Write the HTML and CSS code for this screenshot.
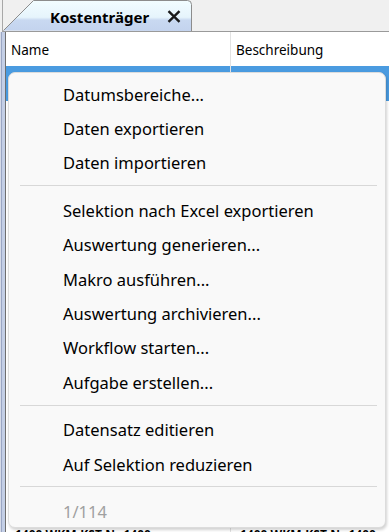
FILE: index.html
```html
<!DOCTYPE html>
<html lang="de">
<head>
<meta charset="utf-8">
<title>Kostenträger</title>
<link rel="stylesheet" href="styles.css">
</head>
<body>
<div class="app">
  <div class="tabstrip">
    <div class="tab">
      <svg class="tab-shape" width="190" height="32" viewBox="0 0 190 32">
        <defs>
          <linearGradient id="tg" x1="0" y1="0" x2="0" y2="1">
            <stop offset="0" stop-color="#f2fdff"/>
            <stop offset="0.55" stop-color="#e6f4fc"/>
            <stop offset="0.64" stop-color="#c9d9f1"/>
            <stop offset="1" stop-color="#c3d3ee"/>
          </linearGradient>
        </defs>
        <path d="M0.5 31.5 L30.5 1.5 L184.5 1.5 Q188.5 1.5 188.5 5.5 L188.5 32" fill="url(#tg)" stroke="#8c8c8c" stroke-width="1"/>
      </svg>
      <span class="tab-title">Kostenträger</span>
      <svg class="tab-close" width="14" height="13" viewBox="0 0 14 13">
        <path d="M1.5 1.2 L12.5 11.8 M12.5 1.2 L1.5 11.8" stroke="#1a1a1a" stroke-width="2.4"/>
      </svg>
    </div>
  </div>
  <div class="content">
    <div class="stripe"></div>
    <div class="grid">
      <div class="header">
        <div class="col col-name">Name</div>
        <div class="col col-desc">Beschreibung</div>
      </div>
      <div class="rows">
        <div class="row selected"><div class="cell c1">0100 WKM-KST-Nr 0100</div><div class="cell c2">0100 WKM-KST-Nr 0100</div></div>
        <div class="row"><div class="cell c1">0200 WKM-KST-Nr 0200</div><div class="cell c2">0200 WKM-KST-Nr 0200</div></div>
        <div class="row"><div class="cell c1">0300 WKM-KST-Nr 0300</div><div class="cell c2">0300 WKM-KST-Nr 0300</div></div>
        <div class="row"><div class="cell c1">0400 WKM-KST-Nr 0400</div><div class="cell c2">0400 WKM-KST-Nr 0400</div></div>
        <div class="row"><div class="cell c1">0500 WKM-KST-Nr 0500</div><div class="cell c2">0500 WKM-KST-Nr 0500</div></div>
        <div class="row"><div class="cell c1">0600 WKM-KST-Nr 0600</div><div class="cell c2">0600 WKM-KST-Nr 0600</div></div>
        <div class="row"><div class="cell c1">0700 WKM-KST-Nr 0700</div><div class="cell c2">0700 WKM-KST-Nr 0700</div></div>
        <div class="row"><div class="cell c1">0800 WKM-KST-Nr 0800</div><div class="cell c2">0800 WKM-KST-Nr 0800</div></div>
        <div class="row"><div class="cell c1">0900 WKM-KST-Nr 0900</div><div class="cell c2">0900 WKM-KST-Nr 0900</div></div>
        <div class="row"><div class="cell c1">1000 WKM-KST-Nr 1000</div><div class="cell c2">1000 WKM-KST-Nr 1000</div></div>
        <div class="row"><div class="cell c1">1100 WKM-KST-Nr 1100</div><div class="cell c2">1100 WKM-KST-Nr 1100</div></div>
        <div class="row"><div class="cell c1">1200 WKM-KST-Nr 1200</div><div class="cell c2">1200 WKM-KST-Nr 1200</div></div>
        <div class="row"><div class="cell c1">1300 WKM-KST-Nr 1300</div><div class="cell c2">1300 WKM-KST-Nr 1300</div></div>
        <div class="row"><div class="cell c1">1400 WKM-KST-Nr 1400</div><div class="cell c2">1400 WKM-KST-Nr 1400</div></div>
      </div>
    </div>
  </div>

  <div class="menu">
    <div class="item">Datumsbereiche...</div>
    <div class="item">Daten exportieren</div>
    <div class="item">Daten importieren</div>
    <div class="sep"></div>
    <div class="item">Selektion nach Excel exportieren</div>
    <div class="item">Auswertung generieren...</div>
    <div class="item">Makro ausführen...</div>
    <div class="item">Auswertung archivieren...</div>
    <div class="item">Workflow starten...</div>
    <div class="item">Aufgabe erstellen...</div>
    <div class="sep"></div>
    <div class="item">Datensatz editieren</div>
    <div class="item">Auf Selektion reduzieren</div>
    <div class="sep"></div>
    <div class="item disabled">1/114</div>
  </div>
</div>
</body>
</html>
```

FILE: styles.css
```css
html, body {
  margin: 0;
  padding: 0;
}
body {
  width: 389px;
  height: 532px;
  overflow: hidden;
  background: #f0f0f0;
  font-family: "Noto Sans", "Open Sans", sans-serif;
  color: #000;
}
.app {
  position: relative;
  width: 389px;
  height: 532px;
  overflow: hidden;
}
.tabstrip {
  height: 32px;
  box-sizing: border-box;
  border-left: 1px solid #a8a8a8;
  margin-left: 2px;
  border-bottom: 1px solid #9a9a9a;
  background: #f0f0f0;
  display: flex;
  align-items: flex-end;
}
.tab {
  position: relative;
  width: 190px;
  height: 31px;
  display: flex;
  align-items: center;
  box-sizing: border-box;
  padding-left: 47px;
  padding-top: 2px;
}
.tab-shape {
  position: absolute;
  left: 0;
  top: -1px;
}
.tab-title {
  position: relative;
  font-weight: bold;
  font-size: 15px;
  color: #000;
}
.tab-close {
  position: relative;
  margin-left: 18px;
}
.content {
  display: flex;
  height: 500px;
}
.stripe {
  flex: 0 0 5px;
  background: linear-gradient(to right, #d6dbe8 0, #d6dbe8 1px, #9aa6c4 1px, #9aa6c4 2px, #c4cfe6 2px, #c4cfe6 5px);
}
.grid {
  flex: 1 1 0;
  min-width: 0;
  overflow: hidden;
  border-left: 1px solid #6e6e6e;
  background: #fff;
}
.header {
  display: flex;
  height: 34px;
  box-sizing: border-box;
  font-size: 13.5px;
}
.col {
  display: flex;
  align-items: center;
  padding-top: 2px;
}
.col-name {
  flex: 0 0 225px;
  padding-left: 5px;
  box-sizing: border-box;
  border-right: 1px solid #e2e2e2;
}
.col-desc {
  padding-left: 5px;
}
.rows {
  font-size: 12px;
  font-weight: bold;
}
.row {
  display: flex;
  height: 34.79px;
  white-space: nowrap;
}
.row.selected {
  background: #4a9be0;
}
.cell {
  padding-top: 8px;
  overflow: hidden;
}
.cell.c1 {
  flex: 0 0 225px;
  padding-left: 9px;
  box-sizing: border-box;
  border-right: 1px solid #e2e2e2;
}
.cell.c2 {
  padding-left: 9px;
}

.menu {
  position: absolute;
  left: 8px;
  top: 72px;
  width: 378px;
  height: 456px;
  box-sizing: border-box;
  background: #f9f9f9;
  border: 1px solid #dcdcdc;
  border-radius: 7px;
  box-shadow: 1px 2px 3px rgba(0,0,0,0.18);
  padding-top: 4px;
  font-size: 16.5px;
}
.item {
  height: 34.4px;
  display: flex;
  align-items: center;
  padding-left: 54px;
  color: #000;
}
.item.disabled {
  color: #a0a0a0;
}
.sep {
  height: 1px;
  background: #d8d8d8;
  margin: 5px 8px 7px 11px;
}
```
